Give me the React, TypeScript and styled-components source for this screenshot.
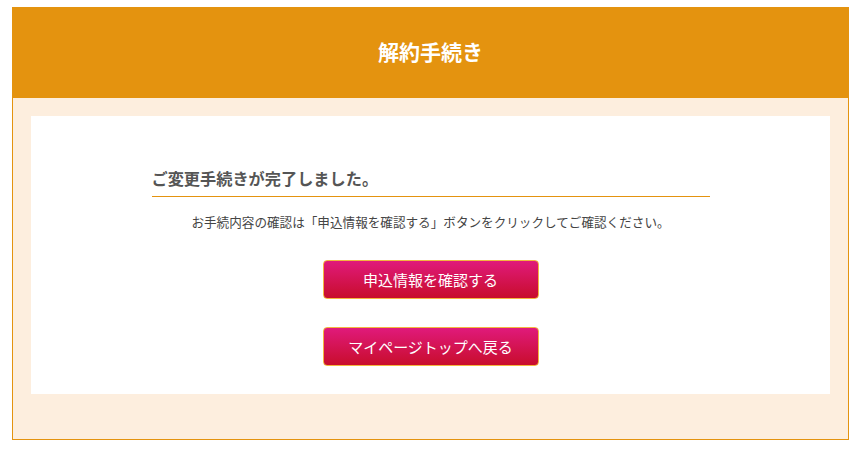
import React from "react";
import styled, { createGlobalStyle } from "styled-components";

const Global = createGlobalStyle`
  html, body { margin: 0; padding: 0; background: #fff; }
  body { font-family: "Noto Sans CJK JP", "Noto Sans", sans-serif; }
`;

const Frame = styled.div`
  margin: 7px 8px 0 12px;
  width: 837px;
`;

const Header = styled.header`
  height: 91px;
  box-sizing: border-box;
  padding-bottom: 4px;
  background: #e4930f;
  display: flex;
  align-items: center;
  justify-content: center;
`;

const Title = styled.h1`
  margin: 0;
  color: #fff;
  font-size: 21px;
  font-weight: 700;
  letter-spacing: 0;
`;

const Body = styled.div`
  background: #fdeede;
  border: 1px solid #e4930f;
  border-top: none;
  padding: 18px 18px 45px;
`;

const Card = styled.div`
  background: #fff;
  height: 278px;
  box-sizing: border-box;
  padding-top: 50px;
  display: flex;
  flex-direction: column;
  align-items: center;
`;

const Heading = styled.h2`
  margin: 0;
  width: 558px;
  box-sizing: border-box;
  padding: 0 0 6px 0;
  border-bottom: 1px solid #e4930f;
  color: #555;
  font-size: 16.2px;
  line-height: 24px;
  font-weight: 700;
`;

const Note = styled.p`
  margin: 16px 0 0;
  color: #444;
  font-size: 12.6px;
  line-height: 18px;
`;

const Buttons = styled.div`
  margin-top: 29px;
  display: flex;
  flex-direction: column;
  gap: 28px;
`;

const Button = styled.button`
  width: 216px;
  height: 39px;
  box-sizing: border-box;
  border: 1px solid #f3b63f;
  border-radius: 4px;
  background: linear-gradient(to bottom, #e01a7b 0%, #c80d2c 100%);
  color: #fff;
  font-family: "Noto Sans CJK JP", sans-serif;
  font-size: 15px;
  padding: 0;
  cursor: pointer;
`;

export default function App() {
  return (
    <>
      <Global />
      <Frame>
        <Header>
          <Title>解約手続き</Title>
        </Header>
        <Body>
          <Card>
            <Heading>ご変更手続きが完了しました。</Heading>
            <Note>お手続内容の確認は「申込情報を確認する」ボタンをクリックしてご確認ください。</Note>
            <Buttons>
              <Button>申込情報を確認する</Button>
              <Button>マイページトップへ戻る</Button>
            </Buttons>
          </Card>
        </Body>
      </Frame>
    </>
  );
}
